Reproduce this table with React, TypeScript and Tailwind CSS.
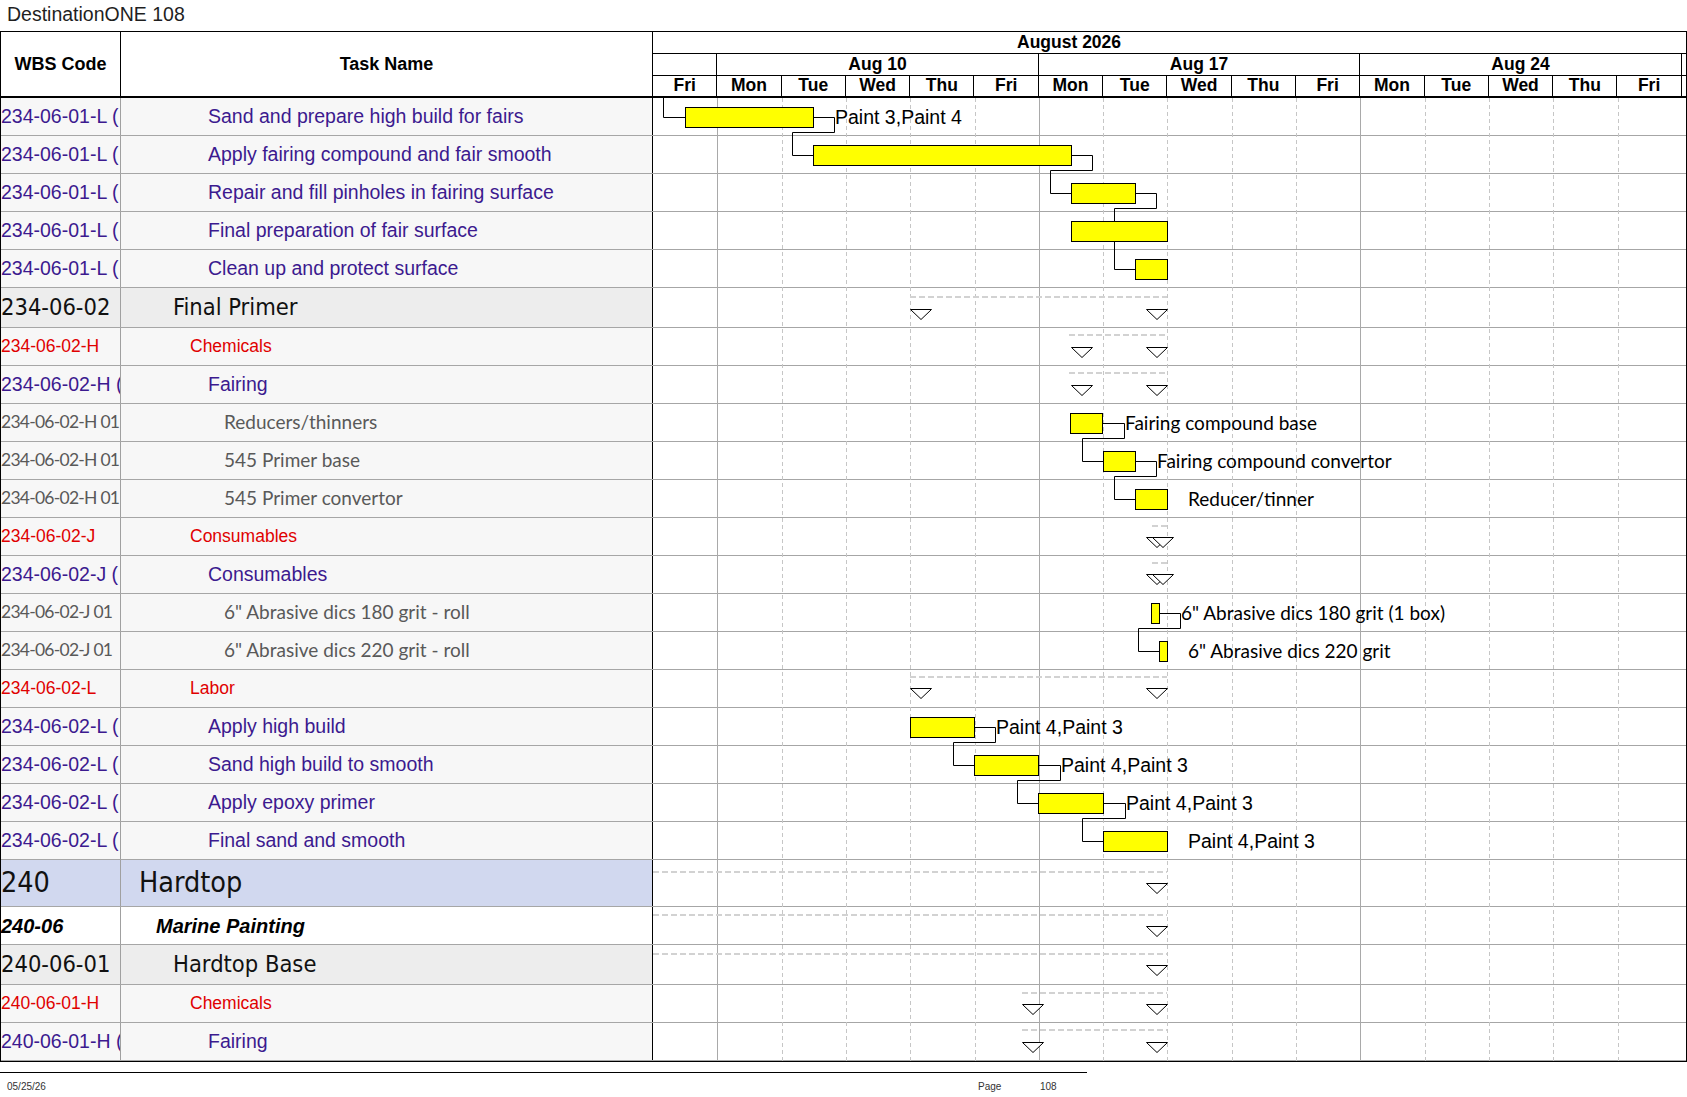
import React from 'react';

type Kind = 'task' | 'cat' | 'item' | 'sec' | 'top' | 'grp';

interface Row {
  kind: Kind;
  wbs: string;
  name: string;
}

const rows: Row[] = [
  { kind: 'task', wbs: '234-06-01-L (', name: 'Sand and prepare high build for fairs' },
  { kind: 'task', wbs: '234-06-01-L (', name: 'Apply fairing compound and fair smooth' },
  { kind: 'task', wbs: '234-06-01-L (', name: 'Repair and fill pinholes in fairing surface' },
  { kind: 'task', wbs: '234-06-01-L (', name: 'Final preparation of fair surface' },
  { kind: 'task', wbs: '234-06-01-L (', name: 'Clean up and protect surface' },
  { kind: 'sec', wbs: '234-06-02', name: 'Final Primer' },
  { kind: 'cat', wbs: '234-06-02-H', name: 'Chemicals' },
  { kind: 'task', wbs: '234-06-02-H (', name: 'Fairing' },
  { kind: 'item', wbs: '234-06-02-H 01', name: 'Reducers/thinners' },
  { kind: 'item', wbs: '234-06-02-H 01', name: '545 Primer base' },
  { kind: 'item', wbs: '234-06-02-H 01', name: '545 Primer convertor' },
  { kind: 'cat', wbs: '234-06-02-J', name: 'Consumables' },
  { kind: 'task', wbs: '234-06-02-J (', name: 'Consumables' },
  { kind: 'item', wbs: '234-06-02-J 01', name: '6" Abrasive dics 180 grit - roll' },
  { kind: 'item', wbs: '234-06-02-J 01', name: '6" Abrasive dics 220 grit - roll' },
  { kind: 'cat', wbs: '234-06-02-L', name: 'Labor' },
  { kind: 'task', wbs: '234-06-02-L (', name: 'Apply high build' },
  { kind: 'task', wbs: '234-06-02-L (', name: 'Sand high build to smooth' },
  { kind: 'task', wbs: '234-06-02-L (', name: 'Apply epoxy primer' },
  { kind: 'task', wbs: '234-06-02-L (', name: 'Final sand and smooth' },
  { kind: 'top', wbs: '240', name: 'Hardtop' },
  { kind: 'grp', wbs: '240-06', name: 'Marine Painting' },
  { kind: 'sec', wbs: '240-06-01', name: 'Hardtop Base' },
  { kind: 'cat', wbs: '240-06-01-H', name: 'Chemicals' },
  { kind: 'task', wbs: '240-06-01-H (', name: 'Fairing' },
];

const kindStyle: Record<Kind, { h: string; px: number; bg: string; text: string; wbsText: string; pad: string }> = {
  task: {
    h: 'h-[38px]', px: 38, bg: 'bg-[#f7f7f7]',
    text: "text-[19.5px] text-[#3c1a8f] font-['Liberation_Sans',Arial,sans-serif]",
    wbsText: "text-[19.5px] text-[#3c1a8f] font-['Liberation_Sans',Arial,sans-serif]",
    pad: 'pl-[87px]',
  },
  cat: {
    h: 'h-[38px]', px: 38, bg: 'bg-[#f7f7f7]',
    text: "text-[17.5px] text-[#e00000] font-['Liberation_Sans',Arial,sans-serif]",
    wbsText: "text-[17.5px] text-[#e00000] font-['Liberation_Sans',Arial,sans-serif]",
    pad: 'pl-[69px]',
  },
  item: {
    h: 'h-[38px]', px: 38, bg: 'bg-[#f7f7f7]',
    text: "text-[19px] text-[#595959] font-['Lato',sans-serif]",
    wbsText: "text-[17.5px] tracking-[-0.75px] text-[#595959] font-['Lato',sans-serif]",
    pad: 'pl-[103px]',
  },
  sec: {
    h: 'h-[40px]', px: 40, bg: 'bg-[#ededed]',
    text: "text-[23.5px] text-[#111] font-['DejaVu_Sans_Condensed','Liberation_Sans',sans-serif]",
    wbsText: "text-[23.5px] text-[#111] font-['DejaVu_Sans_Condensed','Liberation_Sans',sans-serif]",
    pad: 'pl-[52px]',
  },
  top: {
    h: 'h-[47px]', px: 47, bg: 'bg-[#d1d8ef]',
    text: "text-[28.5px] text-[#111] font-['DejaVu_Sans_Condensed','Liberation_Sans',sans-serif]",
    wbsText: "text-[28.5px] text-[#111] font-['DejaVu_Sans_Condensed','Liberation_Sans',sans-serif]",
    pad: 'pl-[18px]',
  },
  grp: {
    h: 'h-[38px]', px: 38, bg: 'bg-white',
    text: "text-[20px] font-bold italic text-black font-['Liberation_Sans',Arial,sans-serif]",
    wbsText: "text-[20px] font-bold italic text-black font-['Liberation_Sans',Arial,sans-serif]",
    pad: 'pl-[35px]',
  },
};

const days = ['Fri', 'Mon', 'Tue', 'Wed', 'Thu', 'Fri', 'Mon', 'Tue', 'Wed', 'Thu', 'Fri', 'Mon', 'Tue', 'Wed', 'Thu', 'Fri'];

// page coordinates of the gantt body
const X0 = 653;
const Y0 = 98;
const DAY = 64.3;

const tops: number[] = [];
rows.reduce((y, r) => {
  tops.push(y);
  return y + kindStyle[r.kind].px;
}, Y0);
const bodyBottom = tops[tops.length - 1] + kindStyle[rows[rows.length - 1].kind].px;

const bars: [number, number, number][] = [
  [0, 685, 813], [1, 813, 1071], [2, 1071, 1135], [3, 1071, 1167], [4, 1135, 1167],
  [8, 1070, 1102], [9, 1103, 1135], [10, 1135, 1167], [13, 1151, 1159], [14, 1159, 1167],
  [16, 910, 974], [17, 974, 1038], [18, 1038, 1103], [19, 1103, 1167],
];

// [row, fromX, outX, backX, toX, toRow]
const links: [number, number, number, number, number, number][] = [
  [0, 813, 834, 792, 813, 1],
  [1, 1071, 1092, 1050, 1071, 2],
  [2, 1135, 1156, 1114, 1135, 4],
  [8, 1102, 1124, 1082, 1103, 9],
  [9, 1135, 1156, 1114, 1135, 10],
  [13, 1159, 1180, 1138, 1159, 14],
  [16, 974, 995, 953, 974, 17],
  [17, 1038, 1060, 1017, 1038, 18],
  [18, 1103, 1125, 1082, 1103, 19],
];

const ARIAL = 'Liberation Sans, Arial, sans-serif';
const CALIBRI = 'Lato, sans-serif';

const labels: [number, number, string, string][] = [
  [0, 835, 'Paint 3,Paint 4', ARIAL],
  [8, 1125, 'Fairing compound base', CALIBRI],
  [9, 1157, 'Fairing compound convertor', CALIBRI],
  [10, 1188, 'Reducer/tinner', CALIBRI],
  [13, 1181, '6" Abrasive dics 180 grit (1 box)', CALIBRI],
  [14, 1188, '6" Abrasive dics 220 grit', CALIBRI],
  [16, 996, 'Paint 4,Paint 3', ARIAL],
  [17, 1061, 'Paint 4,Paint 3', ARIAL],
  [18, 1126, 'Paint 4,Paint 3', ARIAL],
  [19, 1188, 'Paint 4,Paint 3', ARIAL],
];

// [row, dashed line offset, x1, x2, triangle top offset, triangle x's]
const summaries: [number, number, number, number, number, number[]][] = [
  [5, 9, 910, 1167, 21, [910, 1146]],
  [6, 7, 1069, 1167, 19, [1071, 1146]],
  [7, 7, 1069, 1167, 19, [1071, 1146]],
  [11, 8, 1152, 1167, 19, [1146, 1152]],
  [12, 7, 1152, 1167, 18, [1146, 1152]],
  [15, 7, 910, 1167, 18, [910, 1146]],
  [20, 12, 653, 1167, 23, [1146]],
  [21, 8, 653, 1167, 19, [1146]],
  [22, 9, 653, 1167, 20, [1146]],
  [23, 8, 1022, 1167, 19, [1022, 1146]],
  [24, 7, 1022, 1167, 19, [1022, 1146]],
];

function GanttOverlay() {
  const height = bodyBottom - Y0;
  const mid = (r: number) => tops[r] + 19;
  return (
    <svg className="absolute left-[652px] top-0 pointer-events-none" width={1033} height={height}>
      <g transform={`translate(${-X0} ${-Y0})`}>
        {Array.from({ length: 15 }, (_, k) => {
          const i = k + 1;
          const x = Math.round(X0 + i * DAY) + 0.5;
          const week = i === 1 || i === 6 || i === 11;
          return (
            <line
              key={i}
              x1={x}
              x2={x}
              y1={Y0}
              y2={bodyBottom}
              stroke={week ? '#a9a9a9' : '#c6c6c6'}
              strokeDasharray={week ? undefined : '4 3'}
            />
          );
        })}

        {summaries.map(([r, dy, x1, x2, ty, tris]) => (
          <g key={`s${r}`}>
            <line x1={x1} x2={x2} y1={tops[r] + dy} y2={tops[r] + dy} stroke="#d2d2d2" strokeWidth={2} strokeDasharray="6 3" />
            {tris.map((tx) => (
              <polygon
                key={tx}
                points={`${tx + 0.5},${tops[r] + ty + 0.5} ${tx + 21.5},${tops[r] + ty + 0.5} ${tx + 11},${tops[r] + ty + 10.5}`}
                fill="white"
                stroke="black"
                strokeWidth={1}
              />
            ))}
          </g>
        ))}

        <polyline points={`663.5,${Y0} 663.5,117.5 685,117.5`} fill="none" stroke="black" />
        {links.map(([r, fx, ox, bx, tx, r2]) => {
          const y1 = mid(r) + 0.5;
          const yb = tops[r] + 34.5;
          const y2 = mid(r2) + 0.5;
          return (
            <polyline
              key={`l${r}`}
              points={`${fx},${y1} ${ox + 0.5},${y1} ${ox + 0.5},${yb} ${bx + 0.5},${yb} ${bx + 0.5},${y2} ${tx},${y2}`}
              fill="none"
              stroke="black"
            />
          );
        })}

        {bars.map(([r, x1, x2]) => (
          <rect key={`b${r}`} x={x1 + 0.5} y={tops[r] + 9.5} width={x2 - x1} height={20} fill="#ffff00" stroke="black" />
        ))}

        {labels.map(([r, x, t, f]) => (
          <text key={`t${r}`} x={x} y={mid(r) + 7} fontFamily={f} fontSize={f === ARIAL ? 19.5 : 19} fill="#000">
            {t}
          </text>
        ))}
      </g>
    </svg>
  );
}

function TableRow({ row }: { row: Row }) {
  const s = kindStyle[row.kind];
  return (
    <div className={`flex ${s.h} border-b border-[#a6a6a6]`}>
      <div className={`w-[120px] shrink-0 border-r border-[#a0a0a0] ${s.bg} flex items-center overflow-hidden whitespace-nowrap ${s.wbsText}`}>
        {row.wbs}
      </div>
      <div className={`w-[532px] shrink-0 border-r border-black ${s.bg} flex items-center whitespace-nowrap ${s.pad} ${s.text}`}>
        {row.name}
      </div>
      <div className="flex-1 bg-white" />
    </div>
  );
}

export default function App() {
  return (
    <div className="w-[1687px] h-[1097px] bg-white font-['Liberation_Sans',Arial,sans-serif] text-black overflow-hidden">
      <div className="h-[31px] pl-[7px] pt-[5px] text-[19.5px] leading-none text-[#1f1f1f]">DestinationONE 108</div>

      <div className="w-[1687px] border border-black">
        {/* header */}
        <div className="flex h-[66px] border-b-2 border-black">
          <div className="w-[120px] shrink-0 border-r border-black flex items-center justify-center text-[18px] font-bold">
            WBS Code
          </div>
          <div className="w-[532px] shrink-0 border-r border-black flex items-center justify-center text-[18px] font-bold">
            Task Name
          </div>
          <div className="flex-1 flex flex-col text-[17.5px] font-bold leading-none">
            <div className="h-[22px] border-b border-black flex items-center pl-[364px]">August 2026</div>
            <div className="h-[22px] border-b border-black grid grid-cols-[repeat(16,64.3px)_1fr]">
              <div className="border-r border-black" />
              <div className="col-span-5 border-r border-black flex items-center justify-center">Aug 10</div>
              <div className="col-span-5 border-r border-black flex items-center justify-center">Aug 17</div>
              <div className="col-span-5 border-r border-black flex items-center justify-center">Aug 24</div>
              <div />
            </div>
            <div className="flex-1 grid grid-cols-[repeat(16,64.3px)_1fr]">
              {days.map((d, i) => (
                <div key={i} className="border-r border-black flex items-center justify-center">
                  {d}
                </div>
              ))}
              <div />
            </div>
          </div>
        </div>

        {/* body */}
        <div className="relative">
          {rows.map((r, i) => (
            <TableRow key={i} row={r} />
          ))}
          <GanttOverlay />
        </div>
      </div>

      {/* footer */}
      <div className="mt-[10px] w-[1087px] border-t border-black" />
      <div className="flex items-center h-[26px] text-[10px] text-[#333]">
        <div className="w-[978px] pl-[7px]">05/25/26</div>
        <div className="w-[62px]">Page</div>
        <div>108</div>
      </div>
    </div>
  );
}
